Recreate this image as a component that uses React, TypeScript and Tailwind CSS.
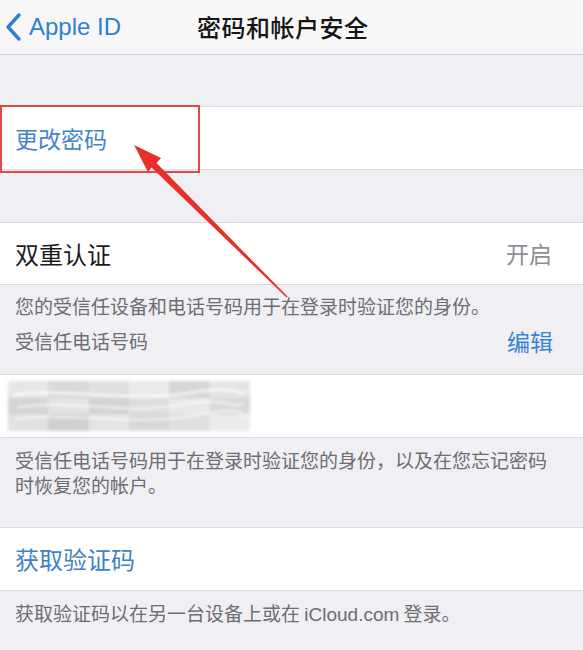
import React from "react";

const cjk = "font-['Noto_Sans_CJK_SC','Noto_Sans',sans-serif]";

function Redacted() {
  // mosaic over the phone number
  const cells = [
    ["bg-[#e4e4e6]", "bg-[#d6d6d8]", "bg-[#dcdcde]", "bg-[#e8e8ea]", "bg-[#d2d2d4]", "bg-[#e2e2e4]"],
    ["bg-[#d0d0d2]", "bg-[#e0e0e2]", "bg-[#cfcfd1]", "bg-[#dadadc]", "bg-[#e6e6e8]", "bg-[#d4d4d6]"],
    ["bg-[#dedee0]", "bg-[#cbcbcd]", "bg-[#e2e2e4]", "bg-[#d3d3d5]", "bg-[#dcdcde]", "bg-[#e9e9eb]"],
  ];
  return (
    <div className="relative ml-[8px] w-[242px] h-[50px] blur-[1.5px] opacity-90">
      <div className="grid grid-cols-6 grid-rows-3 w-full h-full">
        {cells.flat().map((c, i) => (
          <div key={i} className={c} />
        ))}
      </div>
      <svg className="absolute inset-0" width="242" height="50" viewBox="0 0 242 50" fill="none">
        <path d="M4 14 C60 6 120 22 180 12 S230 18 238 10" stroke="#fff" strokeWidth="2" />
        <path d="M10 26 C70 18 110 34 170 24 S220 30 236 22" stroke="#fff" strokeWidth="1.5" />
        <path d="M6 38 C50 30 130 46 190 34 S228 40 240 34" stroke="#fff" strokeWidth="1.5" />
      </svg>
    </div>
  );
}

export default function App() {
  return (
    <div className={`relative w-full h-[650px] overflow-hidden bg-[#efeff4] ${cjk}`}>
      {/* nav bar */}
      <div className="relative h-[55px] bg-[#f7f7f8] border-b border-[#d2d2d6] flex items-center">
        <div className="flex items-center pl-[4px] text-[#2f7fd4]">
          <svg width="20" height="30" viewBox="0 0 20 30" fill="none">
            <path d="M15 3 L4 15 L15 27" stroke="currentColor" strokeWidth="3.4" strokeLinecap="round" strokeLinejoin="round" />
          </svg>
          <span className="ml-[5px] text-[24px] font-['Liberation_Sans',sans-serif] leading-none">Apple ID</span>
        </div>
        <div className="absolute left-[197px] top-0 h-full flex items-center text-[24px] font-medium text-[#151515] tracking-[0.5px]">
          密码和帐户安全
        </div>
      </div>

      <div className="h-[51px]" />

      <div className="h-[64px] bg-white border-y border-[#dcdce0] flex items-center pl-[15px]">
        <span className="text-[23px] text-[#4684c6]">更改密码</span>
      </div>

      <div className="h-[52px]" />

      <div className="h-[63px] bg-white border-y border-[#dcdce0] flex items-center justify-between pl-[15px] pr-[31px]">
        <span className="text-[24px] text-[#1c1c1c]">双重认证</span>
        <span className="text-[23px] text-[#8e8e93]">开启</span>
      </div>

      <div className="h-[89px] flex flex-col px-[15px] pr-[30px] text-[#6d6d72]">
        <div className="mt-[8px] text-[19px] leading-[26px]">您的受信任设备和电话号码用于在登录时验证您的身份。</div>
        <div className="mt-[9px] flex items-center justify-between">
          <span className="text-[19px] leading-[26px]">受信任电话号码</span>
          <span className="text-[23px] text-[#3a84cc] leading-[26px]">编辑</span>
        </div>
      </div>

      <div className="h-[64px] bg-white border-y border-[#dcdce0] flex items-center">
        <Redacted />
      </div>

      <div className="h-[89px] px-[15px] pr-[20px] pt-[9px] text-[19px] leading-[25px] text-[#6d6d72]">
        受信任电话号码用于在登录时验证您的身份，以及在您忘记密码时恢复您的帐户。
      </div>

      <div className="h-[64px] bg-white border-y border-[#dcdce0] flex items-center pl-[15px]">
        <span className="text-[24px] text-[#3f82c9]">获取验证码</span>
      </div>

      <div className="px-[15px] pt-[9px] text-[19px] leading-[26px] text-[#6d6d72]">
        获取验证码以在另一台设备上或在 <span className="font-['Liberation_Sans',sans-serif]">iCloud.com</span> 登录。
      </div>

      {/* annotation: red box and arrow */}
      <div className="absolute left-0 top-[105px] w-[200px] h-[68px] border-2 border-[#e04a45]" />
      <svg className="absolute left-0 top-0 pointer-events-none" width="583" height="650" viewBox="0 0 583 650">
        <polygon
          points="134,145 161,158 156.5,163 287.5,296.5 286.5,297.5 151.5,167.5 148,172"
          fill="#e8302a"
        />
      </svg>
    </div>
  );
}
